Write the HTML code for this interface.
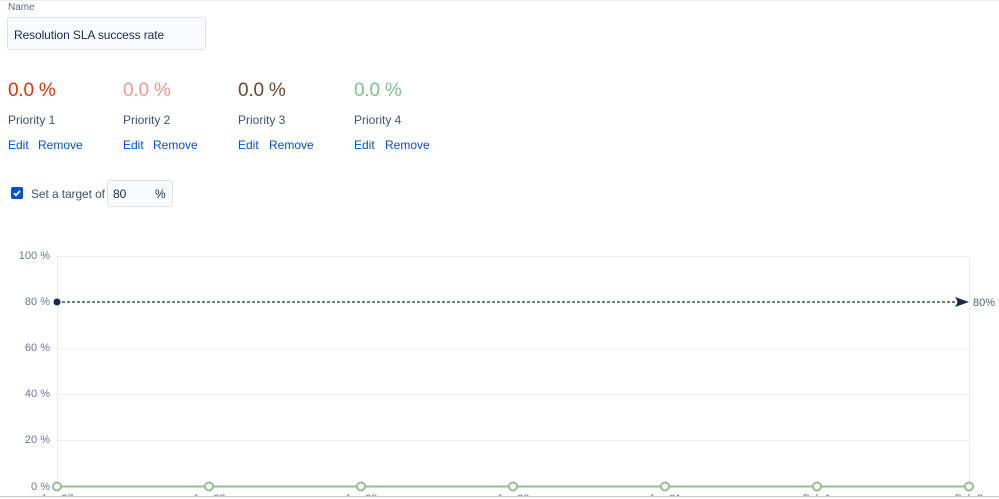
<!DOCTYPE html>
<html><head><meta charset="utf-8"><style>
body{margin:0;width:999px;height:499px;overflow:hidden;background:#fff;font-family:"Liberation Sans",sans-serif;position:relative}
.a{position:absolute;white-space:nowrap}
.big{font-size:19px;top:80px;letter-spacing:-0.2px}
.pr{font-size:12px;color:#42526e;top:113px}
.lk{font-size:12px;color:#0052cc;top:138px}
</style></head><body>
<div style="position:absolute;left:0;top:0;width:999px;height:1px;background:#eee"></div>
<div class="a" style="left:8px;top:2px;font-size:10px;color:#5e6c84">Name</div>
<div class="a" style="left:7px;top:17px;width:199px;height:33px;border:1px solid #dfe1e6;border-radius:3px;background:#fafbfc;box-sizing:border-box"></div>
<div class="a" style="left:14px;top:28px;font-size:12px;color:#172b4d;letter-spacing:-0.1px">Resolution SLA success rate</div>

<div class="a big" style="left:8px;color:#de350b">0.0 %</div>
<div class="a big" style="left:123px;color:#f0998c">0.0 %</div>
<div class="a big" style="left:238px;color:#6b4827">0.0 %</div>
<div class="a big" style="left:354px;color:#7ec28a">0.0 %</div>
<div class="a pr" style="left:8px">Priority 1</div>
<div class="a pr" style="left:123px">Priority 2</div>
<div class="a pr" style="left:238px">Priority 3</div>
<div class="a pr" style="left:354px">Priority 4</div>
<div class="a lk" style="left:8px">Edit</div><div class="a lk" style="left:38px">Remove</div>
<div class="a lk" style="left:123px">Edit</div><div class="a lk" style="left:153px">Remove</div>
<div class="a lk" style="left:238px">Edit</div><div class="a lk" style="left:269px">Remove</div>
<div class="a lk" style="left:354px">Edit</div><div class="a lk" style="left:385px">Remove</div>

<div class="a" style="left:11px;top:187px;width:12px;height:12px;background:#0052cc;border-radius:2px">
<svg width="12" height="12" style="position:absolute;left:0;top:0"><path d="M3 6.2l2 2 4-4.4" stroke="#fff" stroke-width="1.8" fill="none"/></svg></div>
<div class="a" style="left:31px;top:187px;font-size:12px;color:#42526e;letter-spacing:-0.1px">Set a target of</div>
<div class="a" style="left:107px;top:180px;width:66px;height:27px;border:1px solid #dfe1e6;border-radius:3px;background:#fafbfc;box-sizing:border-box"></div>
<div class="a" style="left:113px;top:187px;font-size:12px;color:#172b4d">80</div>
<div class="a" style="left:155px;top:187px;font-size:12px;color:#172b4d">%</div>

<svg class="a" style="left:0;top:0" width="999" height="499" font-family="Liberation Sans" font-size="11">
<g stroke="#ebecf0" stroke-width="1">
<line x1="57" y1="256.5" x2="969" y2="256.5"/>
<line x1="57" y1="348.5" x2="969" y2="348.5"/>
<line x1="57" y1="394.5" x2="969" y2="394.5"/>
<line x1="57" y1="440.5" x2="969" y2="440.5"/>
<line x1="57.5" y1="256" x2="57.5" y2="486"/>
<line x1="969.5" y1="256" x2="969.5" y2="486"/>
</g>
<g fill="#6b778c" text-anchor="end">
<text x="50" y="259">100 %</text><text x="50" y="305">80 %</text><text x="50" y="351">60 %</text>
<text x="50" y="397">40 %</text><text x="50" y="443">20 %</text><text x="50" y="490">0 %</text>
</g>
<line x1="57" y1="302" x2="958" y2="302" stroke="#172b4d" stroke-width="1.3" stroke-dasharray="3,2"/>
<circle cx="57" cy="302" r="3.5" fill="#172b4d"/>
<path d="M955 297l14 5-14 5 3-5z" fill="#172b4d"/>
<text x="973" y="306" fill="#505f79">80%</text>
<g fill="#6b778c" text-anchor="middle">
<text x="57" y="502">Jan 27</text><text x="209" y="502">Jan 28</text><text x="361" y="502">Jan 29</text>
<text x="513" y="502">Jan 30</text><text x="665" y="502">Jan 31</text><text x="817" y="502">Feb 1</text><text x="969" y="502">Feb 2</text>
</g>
<line x1="57" y1="486.5" x2="969" y2="486.5" stroke="#8fc28f" stroke-width="2"/>
<g fill="#fff" stroke="#8fc28f" stroke-width="2">
<circle cx="57" cy="486.5" r="4"/><circle cx="209" cy="486.5" r="4"/><circle cx="361" cy="486.5" r="4"/>
<circle cx="513" cy="486.5" r="4"/><circle cx="665" cy="486.5" r="4"/><circle cx="817" cy="486.5" r="4"/><circle cx="969" cy="486.5" r="4"/>
</g>
<rect x="0" y="496" width="999" height="3" fill="#fff"/>
<line x1="0" y1="496.5" x2="999" y2="496.5" stroke="#c1c7d0"/>
</svg>
</body></html>
